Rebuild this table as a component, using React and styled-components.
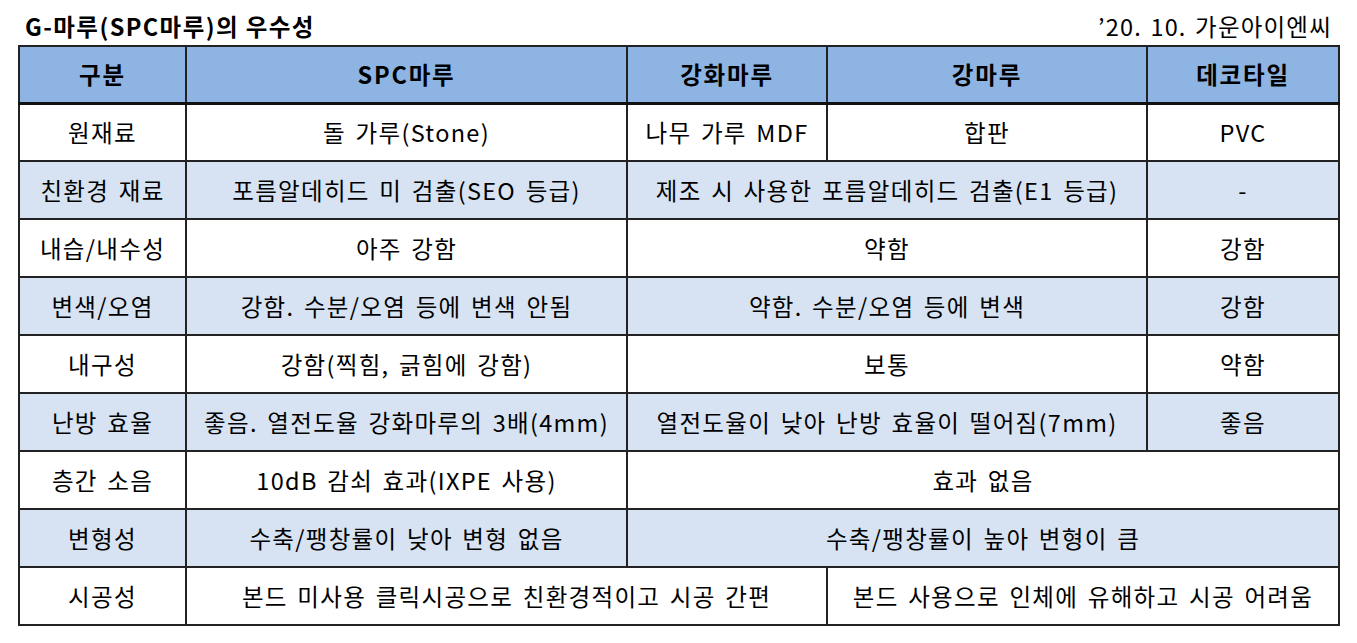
import React from 'react';
import styled, { createGlobalStyle } from 'styled-components';

const GlobalStyle = createGlobalStyle`
  html, body {
    margin: 0;
    padding: 0;
    background: #ffffff;
  }
  body {
    font-family: "Noto Sans CJK KR", "Noto Sans", sans-serif;
    color: #000;
  }
`;

const Page = styled.div`
  width: 1357px;
  height: 643px;
  padding: 0 19px 0 18px;
  box-sizing: border-box;
  overflow: hidden;
`;

const TitleBar = styled.div`
  display: flex;
  justify-content: space-between;
  align-items: center;
  height: 45px;
  padding: 6px 6px 0 7px;
  box-sizing: border-box;
`;

const Title = styled.h1`
  margin: 0;
  font-size: 23.5px;
  font-weight: 700;
  letter-spacing: 1.4px;
`;

const DateNote = styled.span`
  font-size: 23.5px;
  font-weight: 400;
  letter-spacing: 1.2px;
  word-spacing: 2px;
`;

const Table = styled.table`
  width: 1320px;
  table-layout: fixed;
  border-collapse: collapse;
  border: 2px solid #111;
`;

const Row = styled.tr`
  height: 58px;
  background: ${p => (p.$shade ? '#d7e3f3' : '#ffffff')};
`;

const HeadRow = styled.tr`
  height: 57px;
  background: #8db4e2;
  border-bottom: 3px solid #111;
`;

const Th = styled.th`
  border: 2px solid #222;
  font-size: 23.5px;
  font-weight: 700;
  letter-spacing: 1.8px;
  text-align: center;
  padding: 0;
`;

const Td = styled.td`
  border: 2px solid #222;
  font-size: 23.5px;
  font-weight: 400;
  letter-spacing: 1.3px;
  word-spacing: 3px;
  text-align: center;
  padding: 0;
  white-space: nowrap;
`;

const cols = [167, 441, 200, 320, 192];

const headers = ['구분', 'SPC마루', '강화마루', '강마루', '데코타일'];

const rows = [
  ['원재료', ['돌 가루(Stone)'], ['나무 가루 MDF'], ['합판'], ['PVC']],
  ['친환경 재료', ['포름알데히드 미 검출(SEO 등급)'], ['제조 시 사용한 포름알데히드 검출(E1 등급)', 2], ['-']],
  ['내습/내수성', ['아주 강함'], ['약함', 2], ['강함']],
  ['변색/오염', ['강함. 수분/오염 등에 변색 안됨'], ['약함. 수분/오염 등에 변색', 2], ['강함']],
  ['내구성', ['강함(찍힘, 긁힘에 강함)'], ['보통', 2], ['약함']],
  ['난방 효율', ['좋음. 열전도율 강화마루의 3배(4mm)'], ['열전도율이 낮아 난방 효율이 떨어짐(7mm)', 2], ['좋음']],
  ['층간 소음', ['10dB 감쇠 효과(IXPE 사용)'], ['효과 없음', 3]],
  ['변형성', ['수축/팽창률이 낮아 변형 없음'], ['수축/팽창률이 높아 변형이 큼', 3]],
  ['시공성', ['본드 미사용 클릭시공으로 친환경적이고 시공 간편', 2], ['본드 사용으로 인체에 유해하고 시공 어려움', 2]],
];

export default function App() {
  return (
    <Page>
      <GlobalStyle />
      <TitleBar>
        <Title>G-마루(SPC마루)의 우수성</Title>
        <DateNote>’20. 10. 가운아이엔씨</DateNote>
      </TitleBar>
      <Table>
        <colgroup>
          {cols.map((w, i) => (
            <col key={i} style={{ width: w }} />
          ))}
        </colgroup>
        <thead>
          <HeadRow>
            {headers.map(h => (
              <Th key={h}>{h}</Th>
            ))}
          </HeadRow>
        </thead>
        <tbody>
          {rows.map(([label, ...cells], i) => (
            <Row key={label} $shade={i % 2 === 1}>
              <Td>{label}</Td>
              {cells.map(([text, span], j) => (
                <Td key={j} colSpan={span || 1}>{text}</Td>
              ))}
            </Row>
          ))}
        </tbody>
      </Table>
    </Page>
  );
}
